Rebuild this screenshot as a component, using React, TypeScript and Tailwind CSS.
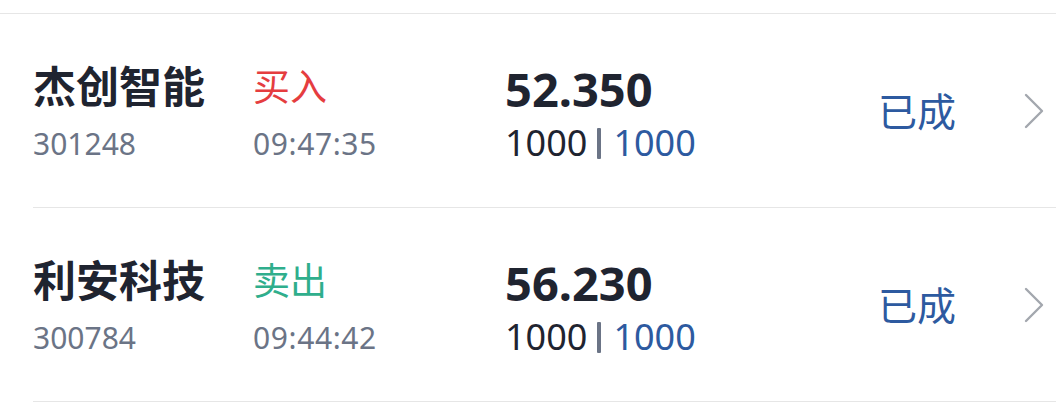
import React from 'react';

interface Order {
  name: string;
  code: string;
  side: 'buy' | 'sell';
  time: string;
  price: string;
  qty: string;
  filled: string;
  status: string;
}

const orders: Order[] = [
  { name: '杰创智能', code: '301248', side: 'buy', time: '09:47:35', price: '52.350', qty: '1000', filled: '1000', status: '已成' },
  { name: '利安科技', code: '300784', side: 'sell', time: '09:44:42', price: '56.230', qty: '1000', filled: '1000', status: '已成' },
];

const Chevron = () => (
  <svg width="22" height="36" viewBox="0 0 22 36" fill="none">
    <polyline points="3,2 19,18 3,34" stroke="#a3a7ae" strokeWidth="2.4" strokeLinecap="round" strokeLinejoin="round" />
  </svg>
);

const OrderRow = ({ order }: { order: Order }) => (
  <div className="ml-[33px] h-[194px] border-b border-[#e6e6e6] flex items-center">
    <div className="w-[220px] flex flex-col">
      <span className="text-[43px] leading-[56px] font-semibold text-[#1f2430]">{order.name}</span>
      <span className="mt-[10px] text-[30px] leading-[38px] text-[#6b7486]">{order.code}</span>
    </div>
    <div className="w-[252px] flex flex-col">
      <span className={`text-[37px] leading-[56px] ${order.side === 'buy' ? 'text-[#e53d3f]' : 'text-[#2fae8c]'}`}>
        {order.side === 'buy' ? '买入' : '卖出'}
      </span>
      <span className="mt-[10px] text-[30px] leading-[38px] tracking-[0.6px] text-[#6b7486]">{order.time}</span>
    </div>
    <div className="w-[373px] flex flex-col pt-[7px]">
      <span className="text-[47px] leading-[52px] font-bold text-[#1f2430]">{order.price}</span>
      <div className="mt-[6px] flex items-center text-[36px] leading-[44px] text-[#1f2430]">
        <span>{order.qty}</span>
        <span className="ml-[10px] mr-[12px] w-[4px] h-[31px] rounded-[1px] bg-[#6b7486]" />
        <span className="text-[#2d5aa0]">{order.filled}</span>
      </div>
    </div>
    <div className="w-[145px] text-[39px] leading-[50px] text-[#2d5aa0]">{order.status}</div>
    <Chevron />
  </div>
);

export default function App() {
  return (
    <div className="w-[1056px] h-[407px] bg-white overflow-hidden" style={{ fontFamily: '"Noto Sans", "Noto Sans CJK SC", sans-serif' }}>
      <div className="h-[13px]" />
      <div className="border-t border-[#e6e6e6]">
        {orders.map((o) => (
          <OrderRow key={o.code} order={o} />
        ))}
      </div>
    </div>
  );
}
